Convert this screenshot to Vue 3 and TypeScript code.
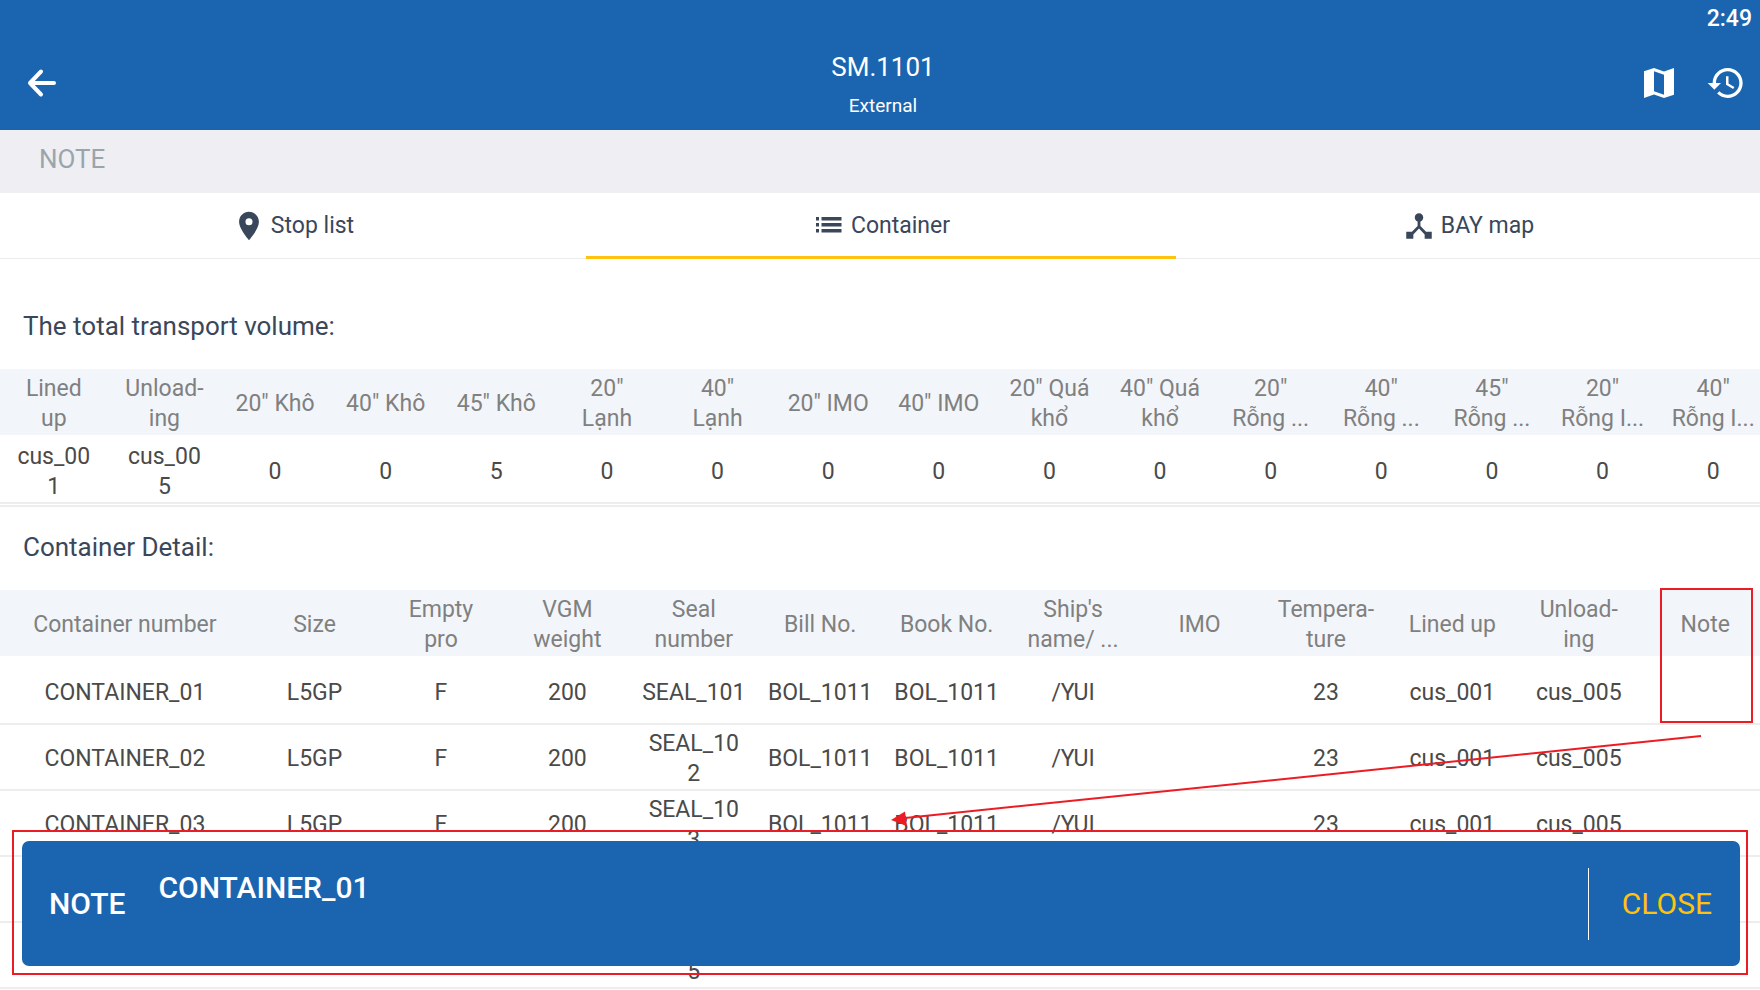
<script setup lang="ts">
import { ref } from 'vue'

interface Tab { id: string; label: string }

const tabs: Tab[] = [
  { id: 'stops', label: 'Stop list' },
  { id: 'container', label: 'Container' },
  { id: 'bay', label: 'BAY map' },
]
const activeTab = ref('container')
const noteOpen = ref(true)

const volumeHeads: string[] = [
  'Lined\nup', 'Unload-\ning', '20" Khô', '40" Khô', '45" Khô', '20"\nLạnh', '40"\nLạnh',
  '20" IMO', '40" IMO', '20" Quá\nkhổ', '40" Quá\nkhổ', '20"\nRỗng ...', '40"\nRỗng ...',
  '45"\nRỗng ...', '20"\nRỗng I...', '40"\nRỗng I...',
]
const volumeRow: string[] = ['cus_00\n1', 'cus_00\n5', '0', '0', '5', '0', '0', '0', '0', '0', '0', '0', '0', '0', '0', '0']

const detailHeads: string[] = [
  'Container number', 'Size', 'Empty\npro', 'VGM\nweight', 'Seal\nnumber', 'Bill No.', 'Book No.',
  "Ship's\nname/ ...", 'IMO', 'Tempera-\nture', 'Lined up', 'Unload-\ning', 'Note',
]
const seals: string[] = ['SEAL_101', 'SEAL_10\n2', 'SEAL_10\n3', 'SEAL_10\n4', 'SEAL_10\n5']
const detailRows: string[][] = seals.map((seal, i) => [
  `CONTAINER_0${i + 1}`, 'L5GP', 'F', '200', seal, 'BOL_1011', 'BOL_1011', '/YUI', '', '23', 'cus_001', 'cus_005', '',
])
</script>

<template>
  <div class="screen">
    <header class="appbar">
      <div class="status">2:49</div>
      <div class="toolbar">
        <button class="icon-btn" type="button" aria-label="Back">
          <svg width="40" height="40" viewBox="0 0 40 40" fill="none" stroke="currentColor" stroke-width="4">
            <path d="M34 20H10M21 8.500L10 20l11 11.500" stroke-linecap="round" stroke-linejoin="round" />
          </svg>
        </button>
        <div class="heading">
          <h1>SM.1101</h1>
          <p>External</p>
        </div>
        <div class="actions">
          <button class="icon-btn" type="button" aria-label="Map">
            <svg width="40" height="40" viewBox="0 0 24 24" fill="currentColor">
              <path d="M21 3l-6 2.100L9 3 3 5v16l6-2.100 6 2.100 6-2zM15 19l-6-2.110V5l6 2.110z" />
            </svg>
          </button>
          <button class="icon-btn" type="button" aria-label="History">
            <svg width="40" height="40" viewBox="0 0 24 24" fill="currentColor">
              <path d="M13 3c-4.970 0-9 4.030-9 9H1l3.890 3.890.070.140L9 12H6c0-3.870 3.130-7 7-7s7 3.130 7 7-3.130 7-7 7c-1.930 0-3.680-.790-4.940-2.060l-1.420 1.420C8.270 19.990 10.510 21 13 21c4.970 0 9-4.030 9-9s-4.030-9-9-9zm-1 5v5l4.280 2.540.720-1.210-3.500-2.080V8H12z" />
            </svg>
          </button>
        </div>
      </div>
    </header>

    <div class="note-strip">NOTE</div>

    <nav class="tabs">
      <button
        v-for="tab in tabs"
        :key="tab.id"
        type="button"
        class="tab"
        :class="{ active: tab.id === activeTab }"
        @click="activeTab = tab.id"
      >
        <svg v-if="tab.id === 'stops'" width="34" height="34" viewBox="0 0 24 24" fill="currentColor">
          <path d="M12 2C8.130 2 5 5.130 5 9c0 5.250 7 13 7 13s7-7.750 7-13c0-3.870-3.130-7-7-7zm0 9.500a2.500 2.500 0 1 1 0-5 2.500 2.500 0 0 1 0 5z" />
        </svg>
        <svg v-else-if="tab.id === 'container'" width="34" height="34" viewBox="0 0 34 34" fill="currentColor">
          <path d="M4 8h3v3.500H4zM9.500 8h20v3.500h-20zM4 14h3v3.500H4zM9.500 14h20v3.500h-20zM4 20h3v3.500H4zM9.500 20h20v3.500h-20z" />
        </svg>
        <svg v-else width="34" height="34" viewBox="0 0 24 24" fill="currentColor">
          <path d="M17 16l-4-4V8.820C14.160 8.400 15 7.300 15 6c0-1.660-1.340-3-3-3S9 4.340 9 6c0 1.300.840 2.400 2 2.820V12l-4 4H3v5h5v-3.050l4-4.200 4 4.200V21h5v-5h-4z" />
        </svg>
        <span>{{ tab.label }}</span>
      </button>
    </nav>

    <main>
      <h2 class="first">The total transport volume:</h2>
      <div class="scroller ruled">
        <table>
          <thead>
            <tr><th v-for="(head, i) in volumeHeads" :key="i" scope="col">{{ head }}</th></tr>
          </thead>
          <tbody>
            <tr><td v-for="(cell, i) in volumeRow" :key="i">{{ cell }}</td></tr>
          </tbody>
        </table>
      </div>

      <h2>Container Detail:</h2>
      <div class="scroller">
        <table>
          <colgroup>
            <col class="wide" />
            <col v-for="n in 12" :key="n" />
          </colgroup>
          <thead>
            <tr><th v-for="(head, i) in detailHeads" :key="i" scope="col">{{ head }}</th></tr>
          </thead>
          <tbody>
            <tr v-for="(row, r) in detailRows" :key="r">
              <td v-for="(cell, i) in row" :key="i">{{ cell }}</td>
            </tr>
          </tbody>
        </table>
      </div>
    </main>

    <section v-if="noteOpen" class="snackbar" aria-label="Container note">
      <strong class="snack-label">NOTE</strong>
      <strong class="snack-text">CONTAINER_01</strong>
      <button type="button" class="close" @click="noteOpen = false">CLOSE</button>
    </section>

    <div class="mark mark-column"></div>
    <div class="mark mark-bar"></div>
    <svg class="arrow" width="812" height="92" viewBox="0 0 812 92" aria-hidden="true">
      <path d="M810 4L14 86" fill="none" stroke="#ec1c24" stroke-width="2" />
      <path d="M0 88L14 79.500L16 94z" fill="#ec1c24" />
    </svg>
  </div>
</template>

<style>
body {
  margin: 0;
  background: #fff;
}
</style>

<style scoped>
.screen {
  position: relative;
  height: 100vh;
  overflow: hidden;
  background: #fff;
  color: #3a475b;
  font-family: Roboto, "Noto Sans", sans-serif;
}

button {
  margin: 0;
  padding: 0;
  border: 0;
  background: none;
  color: inherit;
  font: inherit;
  cursor: pointer;
}

svg {
  display: block;
}

.appbar {
  height: 130px;
  background: #1b65b0;
  color: #fff;
}

.status {
  height: 36px;
  padding-right: 8px;
  font-size: 23px;
  font-weight: 500;
  line-height: 37px;
  text-align: right;
}

.toolbar {
  display: grid;
  grid-template-columns: 1fr auto 1fr;
  align-items: center;
  height: 94px;
  padding: 0 14px 0 20px;
}

.icon-btn {
  justify-self: start;
}

.heading {
  padding-top: 4px;
  text-align: center;
}

h1,
.heading p {
  margin: 0;
  font-weight: 400;
}

h1 {
  font-size: 26px;
  line-height: 42px;
}

.heading p {
  font-size: 19px;
  line-height: 36px;
}

.actions {
  display: flex;
  justify-content: flex-end;
  gap: 27px;
}

.note-strip {
  height: 63px;
  padding: 0 39px;
  background: #efeef3;
  color: #9aa5ab;
  font-size: 26px;
  line-height: 58px;
}

.tabs {
  display: grid;
  grid-template-columns: 293fr 295fr 292fr;
  height: 66px;
  box-sizing: border-box;
  border-bottom: 1px solid #ececec;
}

.tab {
  display: flex;
  align-items: center;
  justify-content: center;
  gap: 5px;
  height: 66px;
  box-sizing: border-box;
  padding-top: 2px;
  border-bottom: 3px solid transparent;
  color: #3a475b;
  font-size: 23px;
}

.tab.active {
  border-bottom-color: #ffc30f;
}

h2 {
  margin: 0;
  padding: 0 23px 2px;
  font-size: 26px;
  font-weight: 400;
  line-height: 81px;
}

h2.first {
  padding-top: 27px;
}

.scroller {
  overflow: hidden;
}

.ruled {
  padding-bottom: 1px;
  border-bottom: 2px solid #ededed;
}

table {
  width: calc(100% + 10px);
  border-collapse: separate;
  border-spacing: 0;
  table-layout: fixed;
  font-size: 23px;
  line-height: 30px;
}

.wide {
  width: 14.2857%;
}

th,
td {
  box-sizing: border-box;
  height: 66px;
  padding: 4px 3px 0 0;
  font-weight: 400;
  text-align: center;
  vertical-align: middle;
  white-space: pre;
}

th {
  height: 69px;
  border-bottom: 3px solid #fff;
  background: #f2f6fa;
  background-clip: padding-box;
  color: #808080;
}

td {
  border-bottom: 2px solid #ededed;
  color: #4a4a4a;
}

.snackbar {
  position: absolute;
  right: 20px;
  bottom: 24px;
  left: 22px;
  display: flex;
  align-items: center;
  gap: 33px;
  height: 125px;
  border-radius: 7px;
  background: #1b65b0;
  color: #fff;
  font-size: 30px;
}

.snackbar strong {
  font-weight: 500;
}

.snack-label {
  padding-left: 27px;
}

.snack-text {
  flex: 1;
  padding-bottom: 32px;
}

.close {
  height: 72px;
  padding: 0 28px 0 33px;
  border-left: 1px solid #fff;
  color: #ffc30f;
}

.mark {
  position: absolute;
  box-sizing: border-box;
  border: 2px solid #ec1c24;
  pointer-events: none;
}

.mark-column {
  top: 588px;
  right: 7px;
  width: 93px;
  height: 135px;
}

.mark-bar {
  right: 12px;
  bottom: 15px;
  left: 12px;
  height: 145px;
}

.arrow {
  position: absolute;
  top: 732px;
  right: 57px;
  overflow: visible;
  pointer-events: none;
}
</style>
